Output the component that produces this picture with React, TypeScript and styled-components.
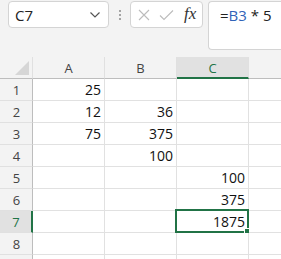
import React from "react";
import styled, { createGlobalStyle } from "styled-components";

const GlobalStyle = createGlobalStyle`
  html, body {
    margin: 0;
    padding: 0;
    background: #f3f3f3;
    font-family: "Open Sans", "Noto Sans", sans-serif;
  }
`;

const GREEN = "#217346";

// D lies past the right edge of the window, so its letter is not shown
const columns = [
  { key: "A", label: "A" },
  { key: "B", label: "B" },
  { key: "C", label: "C" },
  { key: "D", label: "" },
];
const data: Record<string, string> = {
  A1: "25",
  A2: "12",
  A3: "75",
  B2: "36",
  B3: "375",
  B4: "100",
  C5: "100",
  C6: "375",
  C7: "1875",
};
const rows = [1, 2, 3, 4, 5, 6, 7, 8, 9];
const activeCol = "C";
const activeRow = 7;

export default function App() {
  return (
    <Layout>
      <GlobalStyle />
      <Toolbar>
        <NameBox>
          <span>C7</span>
          <svg width="12" height="8" viewBox="0 0 12 8">
            <path d="M1.5 1.5 L6 6 L10.5 1.5" fill="none" stroke="#555" strokeWidth="1.2" />
          </svg>
        </NameBox>
        <Dots>
          <i />
          <i />
          <i />
        </Dots>
        <FuncBox>
          <svg width="12" height="12" viewBox="0 0 12 12">
            <path d="M1 1 L11 11 M11 1 L1 11" stroke="#bcbcbc" strokeWidth="1.1" />
          </svg>
          <svg width="15" height="12" viewBox="0 0 15 12">
            <path d="M1 6.5 L5 10.5 L14 1.5" fill="none" stroke="#bcbcbc" strokeWidth="1.1" />
          </svg>
          <Fx>fx</Fx>
        </FuncBox>
        <FormulaBar>
          =<Ref>B3</Ref> * 5
        </FormulaBar>
      </Toolbar>
      <Grid>
        <Corner>
          <svg width="14" height="14" viewBox="0 0 14 14">
            <path d="M14 0 L14 14 L0 14 Z" fill="#d6d6d6" />
          </svg>
        </Corner>
        {columns.map((c) => (
          <ColHeader key={c.key} $active={c.key === activeCol}>
            {c.label}
          </ColHeader>
        ))}
        {rows.map((r) => (
          <React.Fragment key={r}>
            {/* last row is cut by the window edge, its number falls below it */}
            <RowHeader $active={r === activeRow}>{r < 9 ? r : ""}</RowHeader>
            {columns.map((c) => (
              <Cell key={c.key + r}>
                {data[c.key + r]}
                {c.key === activeCol && r === activeRow && (
                  <Selection>
                    <Handle />
                  </Selection>
                )}
              </Cell>
            ))}
          </React.Fragment>
        ))}
      </Grid>
    </Layout>
  );
}

const Layout = styled.div`
  width: 281px;
  height: 259px;
  overflow: hidden;
  background: #f3f3f3;
`;

const Toolbar = styled.div`
  display: flex;
  align-items: flex-start;
  height: 57px;
  padding-top: 1px;
  box-sizing: border-box;
`;

const NameBox = styled.div`
  margin-left: 8px;
  width: 101px;
  height: 27px;
  box-sizing: border-box;
  background: #fff;
  border: 1px solid #d4d4d4;
  border-radius: 4px;
  display: flex;
  align-items: center;
  justify-content: space-between;
  padding: 0 7px 0 6px;
  color: #222;
  font-size: 15px;
  svg {
    margin-top: 1px;
  }
`;

const Dots = styled.div`
  width: 21px;
  height: 27px;
  display: flex;
  flex-direction: column;
  align-items: center;
  justify-content: center;
  gap: 2px;
  i {
    width: 2px;
    height: 2px;
    background: #8a8a8a;
    border-radius: 1px;
  }
`;

const FuncBox = styled.div`
  width: 73px;
  height: 27px;
  box-sizing: border-box;
  background: #fff;
  border: 1px solid #d4d4d4;
  border-radius: 4px;
  display: flex;
  align-items: center;
  gap: 9px;
  padding-left: 7px;
`;

const Fx = styled.span`
  font-family: "Liberation Serif", "DejaVu Serif", serif;
  font-style: italic;
  font-size: 17px;
  color: #333;
  margin-left: 1px;
  margin-top: -2px;
`;

const FormulaBar = styled.div`
  margin-left: 5px;
  flex: 1;
  height: 49px;
  box-sizing: border-box;
  background: #fff;
  border: 1px solid #d4d4d4;
  border-right: none;
  border-radius: 4px 0 0 4px;
  padding: 3px 0 0 11px;
  font-size: 15px;
  color: #222;
  white-space: pre;
`;

const Ref = styled.span`
  color: #3163b8;
`;

const Grid = styled.div`
  display: grid;
  grid-template-columns: 33px 72px 72px 72px 72px;
  grid-auto-rows: 22px;
`;

const Corner = styled.div`
  background: #f3f3f3;
  border-right: 1px solid #e0e0e0;
  border-bottom: 1px solid #bdbdbd;
  box-sizing: border-box;
  display: flex;
  align-items: flex-end;
  justify-content: flex-end;
  padding: 0 3px 3px 0;
`;

const ColHeader = styled.div<{ $active?: boolean }>`
  box-sizing: border-box;
  background: ${(p) => (p.$active ? "#e1e1e1" : "#f3f3f3")};
  border-right: 1px solid #e0e0e0;
  border-bottom: ${(p) => (p.$active ? `2px solid ${GREEN}` : "1px solid #bdbdbd")};
  color: ${(p) => (p.$active ? GREEN : "#444")};
  font-size: 13px;
  display: flex;
  align-items: center;
  justify-content: center;
  padding-top: ${(p) => (p.$active ? "1px" : "0")};
`;

const RowHeader = styled.div<{ $active?: boolean }>`
  box-sizing: border-box;
  background: ${(p) => (p.$active ? "#e1e1e1" : "#f3f3f3")};
  border-right: ${(p) => (p.$active ? `2px solid ${GREEN}` : "1px solid #bdbdbd")};
  border-bottom: 1px solid #e0e0e0;
  color: ${(p) => (p.$active ? GREEN : "#444")};
  font-size: 13px;
  display: flex;
  align-items: center;
  justify-content: center;
  padding-left: 1px;
`;

const Cell = styled.div`
  position: relative;
  box-sizing: border-box;
  background: #fff;
  border-right: 1px solid #e1e1e1;
  border-bottom: 1px solid #e1e1e1;
  font-size: 14px;
  line-height: 21px;
  color: #111;
  text-align: right;
  padding-right: 3px;
`;

const Selection = styled.div`
  position: absolute;
  left: -2px;
  top: -2px;
  right: -1px;
  bottom: -1px;
  border: 2px solid ${GREEN};
  pointer-events: none;
`;

const Handle = styled.div`
  position: absolute;
  right: -5px;
  bottom: -5px;
  width: 6px;
  height: 6px;
  background: ${GREEN};
  border: 1px solid #fff;
`;
